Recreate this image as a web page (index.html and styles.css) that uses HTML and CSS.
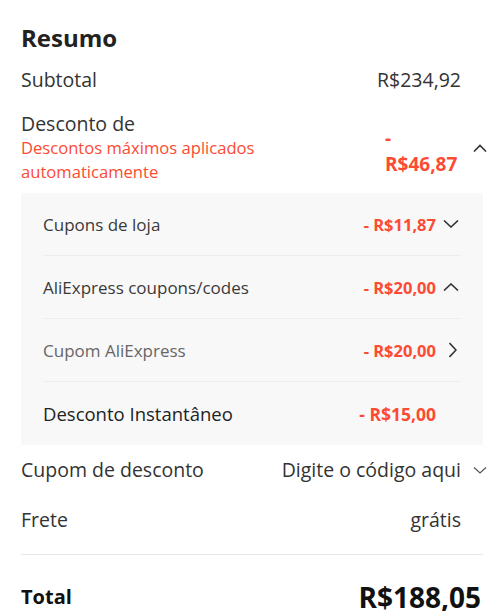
FILE: index.html
```html
<!DOCTYPE html>
<html lang="pt-BR">
<head>
  <meta charset="UTF-8">
  <meta name="viewport" content="width=device-width, initial-scale=1.0">
  <title>Resumo</title>
  <link rel="stylesheet" href="styles.css">
</head>
<body>
  <div class="summary">
    <h1>Resumo</h1>

    <!-- Subtotal -->
    <div class="row">
      <span class="label">Subtotal</span>
      <div class="right">
        <span class="value">R$234,92</span>
        <span class="slot"></span>
      </div>
    </div>

    <!-- Discount -->
    <div class="row row-discount">
      <div class="label">
        Desconto de
        <p class="hint">Descontos máximos aplicados automaticamente</p>
      </div>
      <div class="right">
        <span class="value value-red value-wrap">- R$46,87</span>
        <span class="slot">
          <svg width="14" height="8" viewBox="0 0 14 8"><polyline points="1,7.5 7,1.5 13,7.5" /></svg>
        </span>
      </div>
    </div>

    <!-- Discount details -->
    <div class="panel">
      <div class="sub-row">
        <span>Cupons de loja</span>
        <div class="right">
          <span class="sub-value">- R$11,87</span>
          <span class="sub-slot">
            <svg width="16" height="8" viewBox="0 0 16 8"><polyline points="1,0.5 8,7 15,0.5" /></svg>
          </span>
        </div>
      </div>
      <div class="sub-row">
        <span>AliExpress coupons/codes</span>
        <div class="right">
          <span class="sub-value">- R$20,00</span>
          <span class="sub-slot">
            <svg width="16" height="8" viewBox="0 0 16 8"><polyline points="1,7.5 8,1 15,7.5" /></svg>
          </span>
        </div>
      </div>
      <div class="sub-row sub-light">
        <span>Cupom AliExpress</span>
        <div class="right">
          <span class="sub-value">- R$20,00</span>
          <span class="sub-slot">
            <svg class="arrow-right" width="8" height="16" viewBox="0 0 8 16"><polyline points="0.5,1 7,8 0.5,15" /></svg>
          </span>
        </div>
      </div>
      <div class="sub-row sub-strong">
        <span>Desconto Instantâneo</span>
        <div class="right">
          <span class="sub-value">- R$15,00</span>
          <span class="sub-slot"></span>
        </div>
      </div>
    </div>

    <!-- Coupon and shipping -->
    <div class="row">
      <span class="label">Cupom de desconto</span>
      <div class="right">
        <span class="value">Digite o código aqui</span>
        <span class="slot">
          <svg class="thin" width="14" height="7" viewBox="0 0 14 7"><polyline points="1,0.5 7,6 13,0.5" /></svg>
        </span>
      </div>
    </div>
    <div class="row">
      <span class="label">Frete</span>
      <div class="right">
        <span class="value">grátis</span>
        <span class="slot"></span>
      </div>
    </div>

    <hr class="divider">

    <!-- Total -->
    <div class="row row-total">
      <span class="total-label">Total</span>
      <span class="total-value">R$188,05</span>
    </div>
  </div>
</body>
</html>
```

FILE: styles.css
```css
/* General */
body {
  margin: 0;
  background-color: #fff;
  color: #333;
  font-family: "Open Sans", Arial, sans-serif;
}

.summary {
  padding: 20px 13px 0 21px;
}
h1 {
  margin: 0;
  font-size: 24px;
  line-height: 35px;
  font-weight: 700;
  color: #222;
}

/* Rows */
.row {
  display: flex;
  justify-content: space-between;
  align-items: center;
  padding: 12px 0;
  font-size: 19.5px;
  line-height: 26px;
}
.right {
  display: flex;
  align-items: center;
}
.value {
  color: #333;
}
.value-red {
  color: #fd4a33;
  font-weight: 700;
  font-size: 19px;
}
.value-wrap {
  width: 76px;
  padding-top: 6px;
}
.slot {
  width: 26px;
  display: flex;
  justify-content: flex-end;
}
svg polyline {
  fill: none;
  stroke: #333;
  stroke-width: 1.6;
}
svg.thin polyline {
  stroke: #555;
  stroke-width: 1.2;
}

/* Discount */
.row-discount {
  padding: 7px 0 9px;
}
.row-discount .label {
  line-height: 24px;
  align-self: flex-start;
}
.hint {
  margin: 0;
  width: 260px;
  font-size: 16.6px;
  line-height: 24px;
  color: #fd4a33;
}

/* Discount Panel */
.panel {
  margin-right: 4px;
  padding: 0 22px;
  background-color: #f8f8f8;
}
.sub-row {
  display: flex;
  justify-content: space-between;
  align-items: center;
  box-sizing: border-box;
  height: 63px;
  border-bottom: 1px solid #ececec;
  font-size: 17px;
  color: #3a3a3a;
}
.sub-row:last-child {
  border-bottom: none;
}
.sub-value {
  color: #fd4a33;
  font-weight: 700;
  font-size: 16.5px;
}
.sub-slot {
  width: 25px;
  display: flex;
  padding-left: 7px;
  box-sizing: border-box;
}
.sub-slot .arrow-right {
  margin-left: 6px;
}
.sub-light {
  color: #666;
}
.sub-strong {
  font-size: 18.5px;
  color: #222;
}
.sub-strong .sub-value {
  font-size: 17.5px;
}

/* Total */
.divider {
  margin: 9px 4px 0 0;
  border: none;
  border-top: 1px solid #e8e8e8;
}
.row-total {
  padding: 24px 6px 0 0;
  line-height: 36px;
}
.total-label {
  font-size: 20px;
  font-weight: 700;
  color: #111;
}
.total-value {
  font-size: 28px;
  font-weight: 700;
  color: #111;
}
```
